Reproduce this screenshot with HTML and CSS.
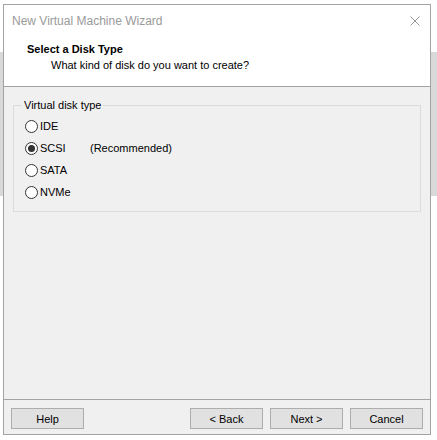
FILE: index.html
```html
<!DOCTYPE html>
<html>
<head>
<meta charset="utf-8">
<link rel="stylesheet" href="styles.css">
</head>
<body>
<div class="page">
  <div class="window">
    <div class="titlebar">
      <span class="title">New Virtual Machine Wizard</span>
      <svg class="close" width="10" height="10" viewBox="0 0 10 10"><path d="M0.5 0.5 L9.5 9.5 M9.5 0.5 L0.5 9.5" stroke="#8a8a8a" stroke-width="0.9" fill="none"/></svg>
    </div>
    <div class="header">
      <div class="h-title">Select a Disk Type</div>
      <div class="h-sub">What kind of disk do you want to create?</div>
    </div>
    <div class="main">
      <fieldset class="group">
        <legend>Virtual disk type</legend>
        <div class="row"><span class="radio"></span><span class="lbl">IDE</span></div>
        <div class="row"><span class="radio checked"></span><span class="lbl name">SCSI</span><span class="lbl">(Recommended)</span></div>
        <div class="row"><span class="radio"></span><span class="lbl">SATA</span></div>
        <div class="row"><span class="radio"></span><span class="lbl">NVMe</span></div>
      </fieldset>
    </div>
    <div class="footer">
      <button class="btn help">Help</button>
      <button class="btn">&lt; Back</button>
      <button class="btn">Next &gt;</button>
      <button class="btn">Cancel</button>
    </div>
  </div>
</div>
</body>
</html>
```
FILE: styles.css
```css
html, body {
  margin: 0;
  padding: 0;
}
body {
  width: 437px;
  height: 440px;
  font-family: "Liberation Sans", Arial, sans-serif;
  font-size: 11px;
  color: #000;
  background: linear-gradient(to bottom, #ffffff 0, #ffffff 52px, #d9d9d9 52px, #d9d9d9 196px, #ffffff 196px);
}
.page {
  padding: 4px 0 0 3px;
}
.window {
  width: 428px;
  height: 431px;
  box-sizing: border-box;
  border: 1px solid #a3a3a3;
  background: #fff;
  display: flex;
  flex-direction: column;
}
.titlebar {
  height: 31px;
  display: flex;
  align-items: center;
  justify-content: space-between;
  padding: 0 10px 0 8px;
}
.title {
  font-size: 12px;
  color: #9a9a9a;
}
.header {
  height: 51px;
  box-sizing: border-box;
  padding: 6px 0 0 23px;
  border-bottom: 1px solid #a3a3a3;
}
.h-title {
  font-weight: bold;
  font-size: 11px;
  line-height: 14px;
}
.h-sub {
  line-height: 14px;
  margin-top: 2px;
  padding-left: 24px;
}
.main {
  flex: 1;
  background: #f0f0f0;
  padding: 12px 9px 0 9px;
}
.group {
  margin: 0;
  border: 1px solid #dcdcdc;
  padding: 3px 10px 8px 11px;
}
.group legend {
  padding: 0 2px;
  margin-left: -3px;
  line-height: 13px;
}
.row {
  height: 22px;
  display: flex;
  align-items: center;
}
.radio {
  width: 13px;
  height: 13px;
  box-sizing: border-box;
  border: 1px solid #333;
  border-radius: 50%;
  background: #fff;
  display: flex;
  align-items: center;
  justify-content: center;
  margin-right: 2px;
}
.radio.checked::after {
  content: "";
  width: 7px;
  height: 7px;
  border-radius: 50%;
  background: #333;
}
.lbl.name {
  width: 50px;
}
.footer {
  border-top: 1px solid #a3a3a3;
  background: #f0f0f0;
  padding: 8px 7px 5px 7px;
  display: flex;
  gap: 7px;
}
.btn {
  width: 73px;
  height: 21px;
  margin: 0;
  padding: 0;
  background: #e1e1e1;
  border: 1px solid #adadad;
  border-radius: 0;
  font-family: "Liberation Sans", Arial, sans-serif;
  font-size: 11px;
  color: #000;
}
.btn.help {
  margin-right: auto;
}
```
